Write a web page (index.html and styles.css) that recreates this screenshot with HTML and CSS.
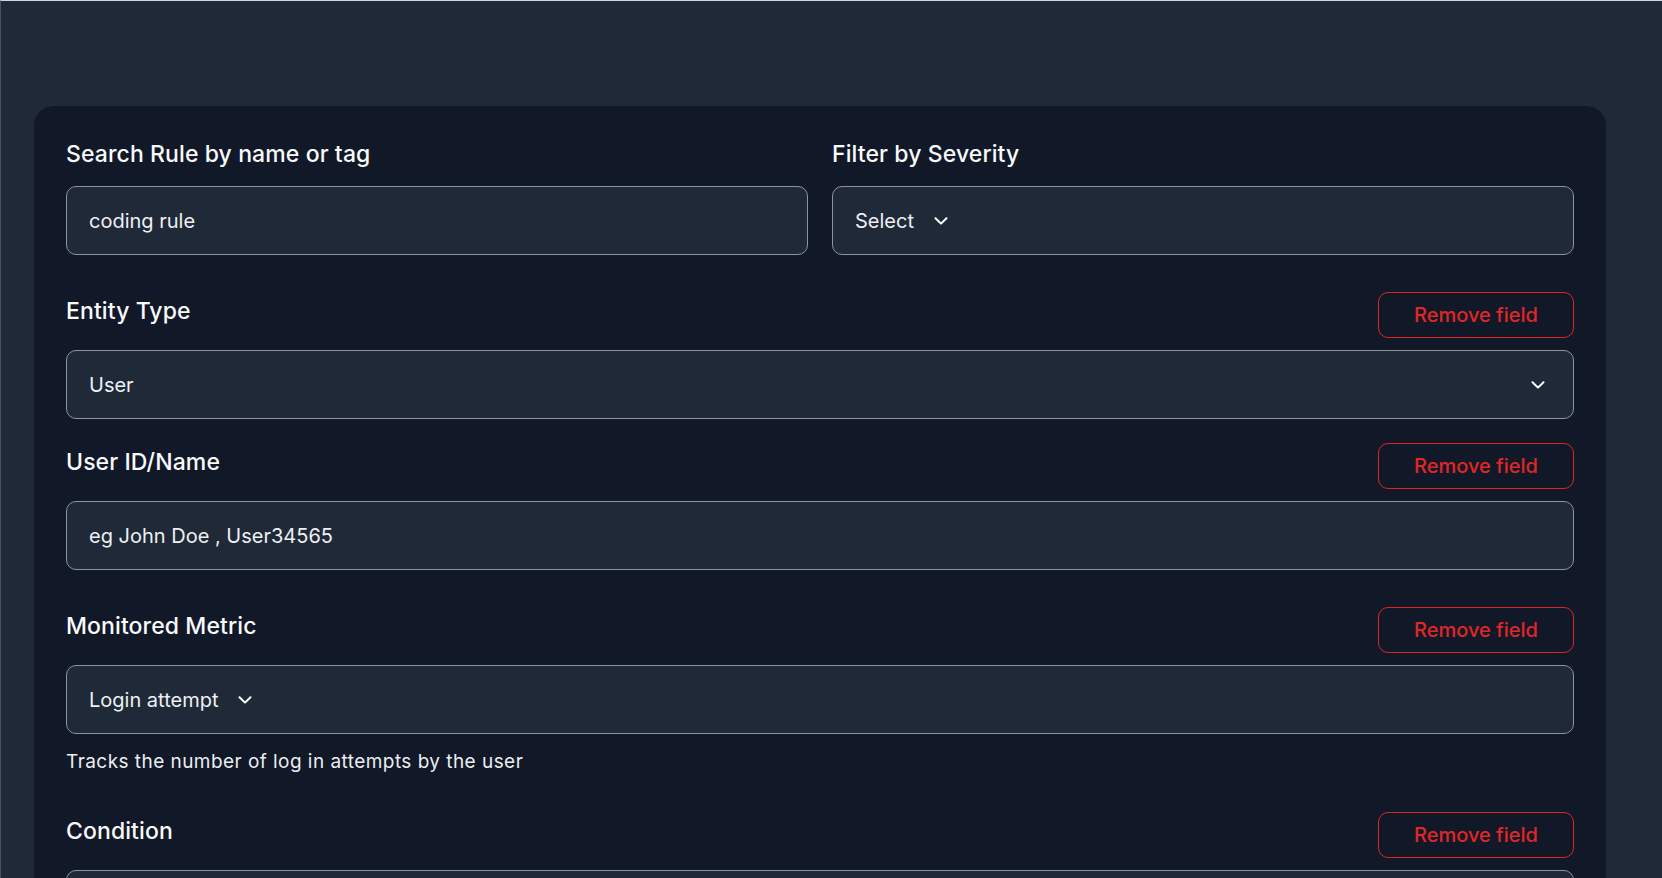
FILE: index.html
```html
<!DOCTYPE html>
<html lang="en">
<head>
<meta charset="utf-8">
<title>Rule filters</title>
<link rel="stylesheet" href="styles.css">
</head>
<body>
<div class="page">
  <form class="card">
    <div class="filter-row">
      <div class="field">
        <label class="label label-top">Search Rule by name or tag</label>
        <div class="control"><span class="value">coding rule</span></div>
      </div>
      <div class="field">
        <label class="label label-top">Filter by Severity</label>
        <div class="control select-inline"><span class="value">Select</span>
          <svg class="chev" viewBox="0 0 14 8" width="14" height="8"><path d="M1.5 1.2 L7 6.6 L12.5 1.2" fill="none" stroke="#fff" stroke-width="2" stroke-linecap="round" stroke-linejoin="round"/></svg>
        </div>
      </div>
    </div>

    <div class="pair">
      <div class="group">
        <div class="group-head">
          <span class="label">Entity Type</span>
          <button type="button" class="remove">Remove field</button>
        </div>
        <div class="control select-full"><span class="value">User</span>
          <svg class="chev" viewBox="0 0 14 8" width="14" height="8"><path d="M1.5 1.2 L7 6.6 L12.5 1.2" fill="none" stroke="#fff" stroke-width="2" stroke-linecap="round" stroke-linejoin="round"/></svg>
        </div>
      </div>
      <div class="group">
        <div class="group-head">
          <span class="label">User ID/Name</span>
          <button type="button" class="remove">Remove field</button>
        </div>
        <div class="control"><span class="value">eg John Doe , User34565</span></div>
      </div>
    </div>

    <div class="group">
      <div class="group-head">
        <span class="label">Monitored Metric</span>
        <button type="button" class="remove">Remove field</button>
      </div>
      <div class="control select-inline"><span class="value">Login attempt</span>
        <svg class="chev" viewBox="0 0 14 8" width="14" height="8"><path d="M1.5 1.2 L7 6.6 L12.5 1.2" fill="none" stroke="#fff" stroke-width="2" stroke-linecap="round" stroke-linejoin="round"/></svg>
      </div>
      <p class="help">Tracks the number of log in attempts by the user</p>
    </div>

    <div class="group">
      <div class="group-head">
        <span class="label">Condition</span>
        <button type="button" class="remove">Remove field</button>
      </div>
      <div class="control"></div>
    </div>
  </form>
</div>
</body>
</html>
```

FILE: styles.css
```css
html, body {
  margin: 0;
  padding: 0;
  background: #1f2937;
  overflow: hidden;
}

body {
  font-family: Inter, "Liberation Sans", sans-serif;
  color: #f9fafb;
}

.page {
  box-sizing: border-box;
  min-height: 878px;
  border-top: 1px solid #d3d6db;
  border-left: 1px solid #4a5262;
  padding: 105px 0 0 33px;
}

.card {
  box-sizing: border-box;
  width: 1572px;
  background: #111827;
  border-radius: 20px;
  padding: 32px 32px 60px;
  display: flex;
  flex-direction: column;
  gap: 37px;
}

.filter-row {
  display: grid;
  grid-template-columns: 1fr 1fr;
  gap: 24px;
}

.field {
  display: flex;
  flex-direction: column;
}

.label {
  font-size: 23px;
  font-weight: 500;
  line-height: 39px;
  color: #f9fafb;
  letter-spacing: 0.1px;
}

.label-top {
  line-height: 32px;
  margin-bottom: 16px;
}

.pair {
  display: flex;
  flex-direction: column;
  gap: 24px;
}

.group {
  display: flex;
  flex-direction: column;
}

.group-head {
  display: flex;
  justify-content: space-between;
  align-items: flex-start;
  height: 46px;
  margin-bottom: 12px;
}

.remove {
  box-sizing: border-box;
  width: 196px;
  height: 46px;
  border: 1.5px solid #dc2626;
  border-radius: 10px;
  background: transparent;
  color: #e02727;
  font-family: Inter, "Liberation Sans", sans-serif;
  font-size: 20px;
  font-weight: 500;
  cursor: pointer;
  padding: 0;
}

.control {
  box-sizing: border-box;
  height: 69px;
  border: 1px solid #8c94a2;
  border-radius: 10px;
  background: #1f2937;
  padding: 0 28px 0 22px;
  display: flex;
  align-items: center;
}

.value {
  font-size: 20px;
  color: #eef0f3;
}

.select-inline .chev {
  margin-left: 20px;
}

.select-full {
  justify-content: space-between;
}

.chev {
  display: block;
  flex: none;
}

.help {
  margin: 14px 0 0;
  font-size: 19px;
  line-height: 27px;
  letter-spacing: 0.45px;
  color: #eceef1;
}
```
